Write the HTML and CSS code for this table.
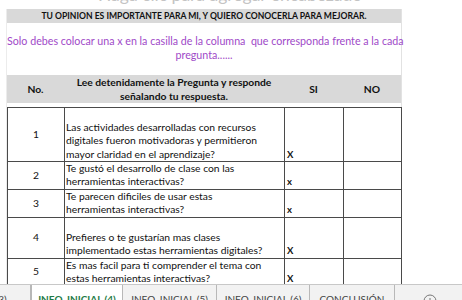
FILE: index.html
```html
<!DOCTYPE html>
<html lang="es">
<head>
<meta charset="utf-8">
<link rel="stylesheet" href="styles.css">
</head>
<body>
<div class="ghost"><span>Haga clic para agregar encabezado</span></div>
<div class="sheet">
  <div class="title">TU OPINION ES IMPORTANTE PARA MI, Y QUIERO CONOCERLA PARA MEJORAR.</div>
  <div class="note">Solo debes colocar una x en la casilla de la columna&nbsp; que corresponda frente a la cada<br>pregunta......</div>
  <div class="head">
    <div class="hc">No.</div>
    <div class="hc">Lee detenidamente la Pregunta y responde<br>señalando tu respuesta.</div>
    <div class="hc">SI</div>
    <div class="hc">NO</div>
  </div>
  <table class="grid">
    <colgroup><col class="c1"><col class="c2"><col class="c3"><col class="c4"></colgroup>
    <tr class="r1"><td class="num">1</td><td class="q">Las actividades desarrolladas con recursos<br>digitales fueron motivadoras y permitieron<br>mayor claridad en el aprendizaje?</td><td class="mark">X</td><td></td></tr>
    <tr class="r2"><td class="num">2</td><td class="q">Te gustó el desarrollo de clase con las<br>herramientas interactivas?</td><td class="mark">x</td><td></td></tr>
    <tr class="r3"><td class="num">3</td><td class="q">Te parecen dificiles de usar estas<br>herramientas interactivas?</td><td class="mark">x</td><td></td></tr>
    <tr class="r4"><td class="num">4</td><td class="q">Prefieres o te gustarían mas clases<br>implementado estas herramientas digitales?</td><td class="mark">X</td><td></td></tr>
    <tr class="r5"><td class="num">5</td><td class="q">Es mas facil para ti comprender el tema con<br>estas herramientas interactivas?</td><td class="mark">X</td><td></td></tr>
  </table>
</div>
<div class="tabs">
  <div class="tab t1">INFO. INICIAL (3)</div>
  <div class="tab active">INFO. INICIAL (4)</div>
  <div class="tab t3">INFO. INICIAL (5)</div>
  <div class="tab t4">INFO. INICIAL (6)</div>
  <div class="tab t5">CONCLUSIÓN</div>
  <div class="add"><svg width="14" height="14" viewBox="0 0 14 14"><circle cx="7" cy="7" r="6" fill="none" stroke="#777" stroke-width="1"/><path d="M7 4v6M4 7h6" stroke="#777" stroke-width="1"/></svg></div>
</div>
</body>
</html>
```
FILE: styles.css
```css
* { box-sizing: border-box; }
html, body { margin: 0; padding: 0; }
body {
  width: 462px;
  height: 300px;
  overflow: hidden;
  background: #fff;
  font-family: Lato, "Liberation Sans", sans-serif;
  color: #111;
}
.ghost {
  height: 9px;
  overflow: hidden;
  display: flex;
  align-items: flex-end;
  justify-content: flex-start;
  padding-left: 98px;
  padding-bottom: 6px;
}
.ghost span {
  font-size: 17.5px;
  line-height: 17px;
  color: #c4c4c4;
  white-space: nowrap;
  flex-shrink: 0;
}
.sheet {
  margin-left: 6px;
  width: 396px;
  height: 276px;
  border-left: 1px solid #ececec;
  border-right: 1px solid #e2e2e2;
}
.title {
  height: 14px;
  background: #d9d9d9;
  font-size: 8.6px;
  font-weight: bold;
  line-height: 14px;
  text-align: center;
  white-space: nowrap;
}
.note {
  height: 52px;
  padding-top: 11px;
  font-size: 10.7px;
  line-height: 14px;
  color: #a04ac8;
  text-align: center;
  white-space: nowrap;
}
.head {
  display: grid;
  grid-template-columns: 57px 220px 59px 58px;
  height: 28px;
  background: #d9d9d9;
  font-size: 10.3px;
  font-weight: bold;
  margin-bottom: 4px;
}
.hc {
  display: flex;
  align-items: center;
  justify-content: center;
  text-align: center;
  line-height: 14px;
  padding-bottom: 1px;
  white-space: nowrap;
}
.grid {
  border-collapse: collapse;
  table-layout: fixed;
  width: 394px;
  font-size: 10.3px;
}
.c1 { width: 57px; }
.c2 { width: 220px; }
.c3 { width: 59px; }
.c4 { width: 58px; }
.grid td {
  border: 1px solid #4a4a4a;
  padding: 0;
  vertical-align: bottom;
  line-height: 13.4px;
}
.grid td.num {
  vertical-align: middle;
  text-align: center;
}
.grid td.q { padding-left: 1px; white-space: nowrap; overflow: hidden; }
.grid td.mark { padding-left: 2px; font-weight: bold; font-size: 9.5px; }
.r1 { height: 54px; }
.r2 { height: 27px; }
.r3 { height: 27px; }
.r4 { height: 41px; }
.r5 { height: 26px; }
.tabs {
  margin-top: -1px;
  height: 16px;
  background: #f2f2f2;
  border-top: 1px solid #c8c8c8;
  display: flex;
  align-items: flex-start;
  overflow: hidden;
}
.tab {
  height: 16px;
  padding-top: 8px;
  font-size: 10px;
  color: #444;
  text-align: center;
  white-space: nowrap;
  border-right: 1px solid #b8b8b8;
  overflow: hidden;
  line-height: 12px;
}
.t1 { width: 31px; text-indent: -70px; text-align: left; }
.active {
  width: 92px;
  background: #fff;
  color: #1e7a45;
  font-weight: bold;
  margin-top: -1px;
  height: 17px;
  padding-top: 9px;
  border-left: 1px solid #b8b8b8;
}
.t3 { width: 94px; }
.t4 { width: 93px; }
.t5 { width: 85px; }
.add {
  margin-left: 28px;
  padding-top: 7px;
}
```
